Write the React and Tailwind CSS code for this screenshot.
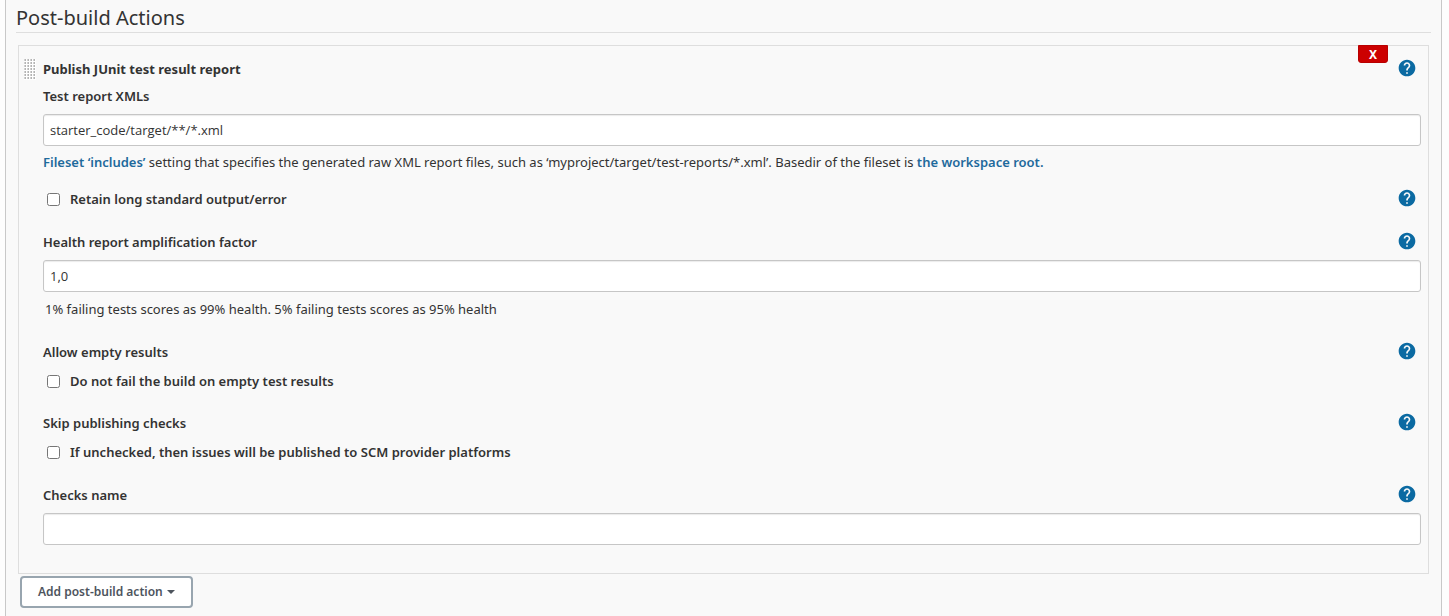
import React from "react";

function HelpButton({ topic }) {
  return (
    <button type="button" aria-label={`Help for ${topic}`} className="mr-1 mb-0.5 flex size-5 shrink-0 items-center justify-center">
      <svg viewBox="0 0 24 24" className="size-5" aria-hidden="true">
        <path
          fill="#0b6aa2"
          d="M12 2C6.48 2 2 6.48 2 12s4.48 10 10 10 10-4.48 10-10S17.52 2 12 2zm1 17h-2v-2h2v2zm2.07-7.75l-.9.92C13.45 12.9 13 13.5 13 15h-2v-.5c0-1.100.45-2.100 1.170-2.830l1.240-1.260c.37-.36.59-.86.59-1.410 0-1.100-.9-2-2-2s-2 .9-2 2H8c0-2.210 1.790-4 4-4s4 1.790 4 4c0 .88-.36 1.680-.93 2.250z"
        />
      </svg>
    </button>
  );
}

function LabelRow({ id, children, help }) {
  return (
    <div className="flex h-5 items-center justify-between">
      <label htmlFor={id} className="font-semibold">{children}</label>
      {help && <HelpButton topic={children} />}
    </div>
  );
}

function CheckRow({ id, children, help }) {
  return (
    <div className="flex h-5 items-center justify-between">
      <label htmlFor={id} className="flex items-center gap-2.5 pl-1 font-semibold">
        <input id={id} type="checkbox" className="size-[13px] shrink-0" />
        {children}
      </label>
      {help && <HelpButton topic={children} />}
    </div>
  );
}

function TextInput({ id, value }) {
  return (
    <input
      id={id}
      type="text"
      defaultValue={value}
      className="mt-2 block h-8 w-full rounded-[3px] border border-[#c6c6c6] bg-white px-1.5 font-['Open_Sans','Noto_Sans',sans-serif] shadow-[inset_0_1px_1px_rgba(0,0,0,0.08)]"
    />
  );
}

function DragHandle() {
  return (
    <svg viewBox="0 0 12 21" className="absolute top-[13px] left-[5px] h-[21px] w-3 cursor-move" aria-hidden="true">
      <defs>
        <pattern id="grip" width="3" height="3" patternUnits="userSpaceOnUse">
          <rect width="3" height="3" fill="#ffffff" />
          <rect width="2" height="2" fill="#d2d2d2" />
          <rect x="1" width="1" height="1" fill="#b4b4b4" />
          <rect x="1" y="1" width="1" height="1" fill="#b4b4b4" />
        </pattern>
      </defs>
      <rect width="12" height="21" fill="url(#grip)" />
    </svg>
  );
}

export default function App() {
  return (
    <div className="min-h-screen bg-[#fdfdfd] pr-[7px] pl-[5px] font-['Noto_Sans','Open_Sans',sans-serif] text-[13px] leading-5 text-[#333]">
      <main className="min-h-screen border-x border-[#c8c8c8] bg-[#f9f9f9] pr-[10px] pb-2 pl-[10px]">
        <h2 className="h-[33px] border-b border-[#dedede] pt-1.5 text-xl leading-6">Post-build Actions</h2>
        <div className="mr-0.5 ml-0.5">
          <section className="relative mt-3 border border-[#dedede] pt-[13px] pr-[7px] pb-7 pl-6">
            <DragHandle />
            <button
              type="button"
              aria-label="Delete"
              className="absolute -top-px right-10 flex h-[18px] w-[30px] items-center justify-center rounded-b-[3px] border border-[#b80000] bg-[#cc0000] pt-0.5 text-xs font-bold text-white"
            >
              X
            </button>
            <div className="flex h-5 items-center justify-between">
              <h3 className="font-bold">Publish JUnit test result report</h3>
              <HelpButton topic="Publish JUnit test result report" />
            </div>

            <div className="mt-[7px]">
              <LabelRow id="xmls">Test report XMLs</LabelRow>
              <TextInput id="xmls" value="starter_code/target/**/*.xml" />
              <p className="mt-1.5">
                <a href="#includes" className="font-semibold text-[#1f6a9c]">Fileset ‘includes’</a> setting that specifies the generated raw XML report files, such as ‘myproject/target/test-reports/*.xml’. Basedir of the fileset is{" "}
                <a href="#workspace" className="font-semibold text-[#1f6a9c]">the workspace root.</a>
              </p>
            </div>

            <div className="mt-[17px]">
              <CheckRow id="retain" help>Retain long standard output/error</CheckRow>
            </div>

            <div className="mt-[23px]">
              <LabelRow id="factor" help>Health report amplification factor</LabelRow>
              <TextInput id="factor" value="1,0" />
              <p className="mt-[7px] pl-0.5">1% failing tests scores as 99% health. 5% failing tests scores as 95% health</p>
            </div>

            <div className="mt-[23px]">
              <LabelRow id="empty" help>Allow empty results</LabelRow>
              <div className="mt-[9px]">
                <CheckRow id="empty">Do not fail the build on empty test results</CheckRow>
              </div>
            </div>

            <div className="mt-[22px]">
              <LabelRow id="skip" help>Skip publishing checks</LabelRow>
              <div className="mt-[9px]">
                <CheckRow id="skip">If unchecked, then issues will be published to SCM provider platforms</CheckRow>
              </div>
            </div>

            <div className="mt-[23px]">
              <LabelRow id="checks" help>Checks name</LabelRow>
              <TextInput id="checks" value="" />
            </div>
          </section>
          <button
            type="button"
            className="mt-0.5 ml-0.5 flex h-8 items-center gap-1 rounded-[4px] border-2 border-[#98a5af] bg-white px-4 text-xs font-semibold text-[#4d545d]"
          >
            Add post-build action
            <svg viewBox="0 0 8 4" className="h-1 w-2" aria-hidden="true">
              <path d="M0 0h8L4 4z" fill="currentColor" />
            </svg>
          </button>
        </div>
      </main>
    </div>
  );
}
